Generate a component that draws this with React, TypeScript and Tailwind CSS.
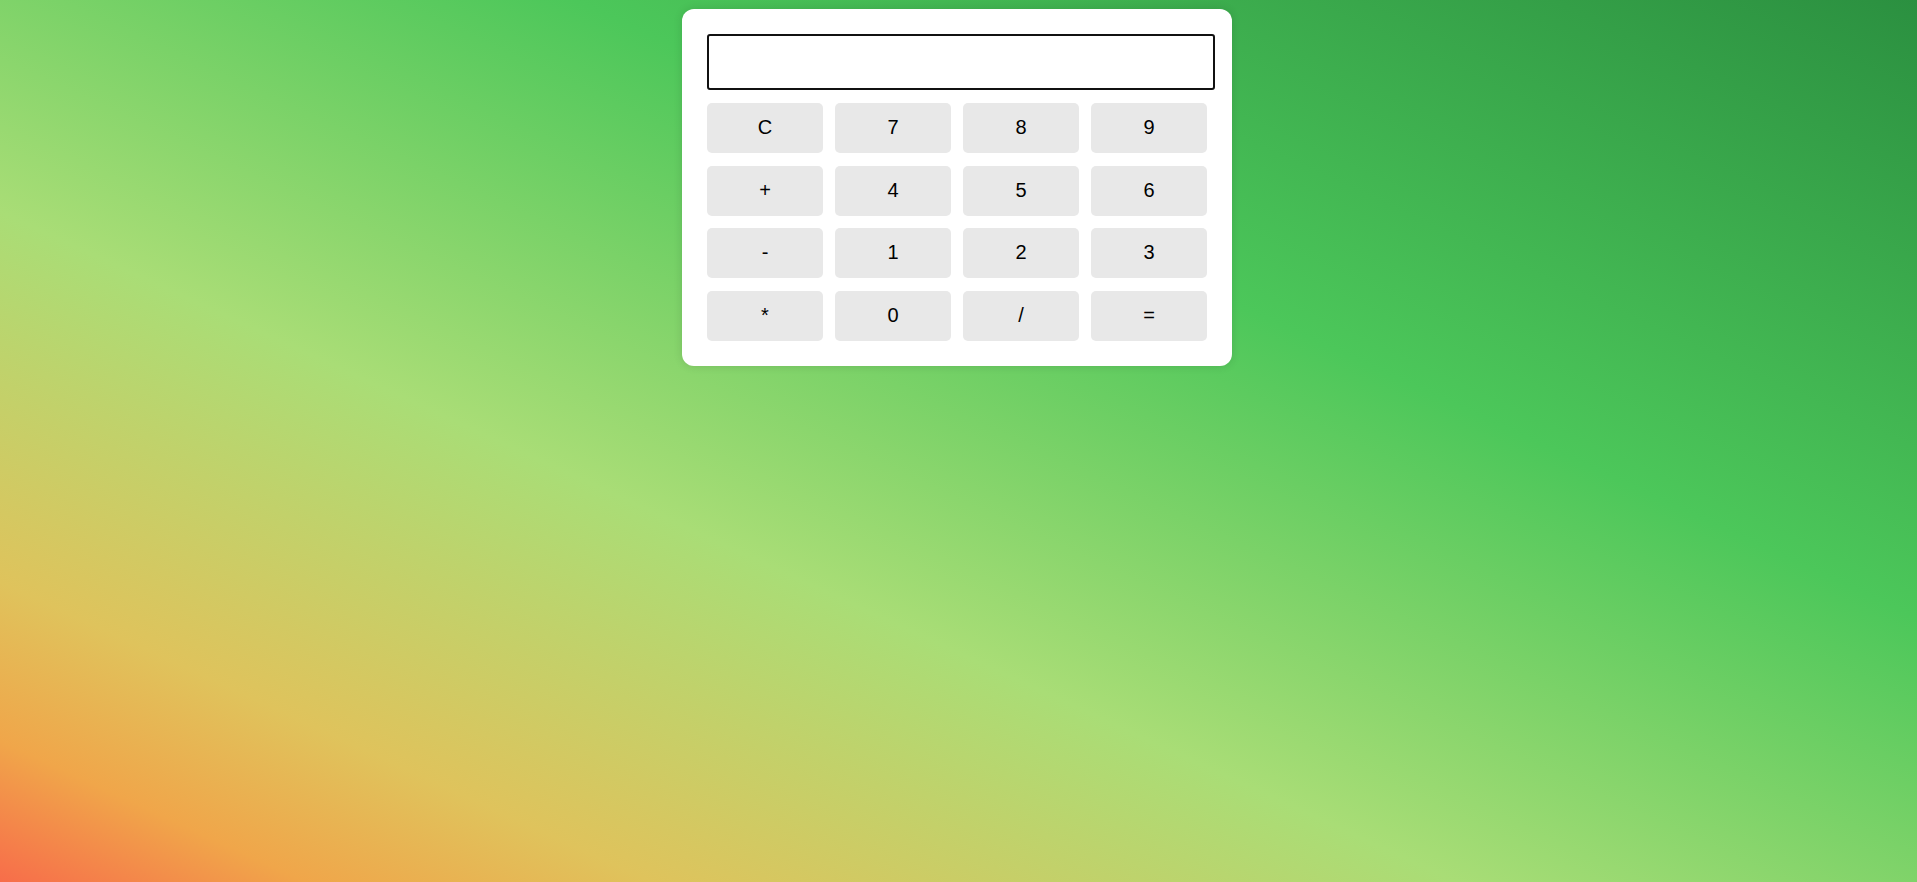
import { useState } from "react";

const keys = ["C", "7", "8", "9", "+", "4", "5", "6", "-", "1", "2", "3", "*", "0", "/", "="];

function evaluate(expr: string) {
  try {
    // simple calculator, same as the original page
    const result = Function(`"use strict"; return (${expr})`)();
    return String(result);
  } catch {
    return "Error";
  }
}

export default function App() {
  const [display, setDisplay] = useState("");

  const press = (key: string) => {
    if (key === "C") return setDisplay("");
    if (key === "=") return setDisplay(evaluate(display));
    setDisplay((d) => d + key);
  };

  return (
    <div className="min-h-screen w-full bg-[linear-gradient(to_top_right,#f76d4a_0%,#f0a64a_8%,#dfc35c_17%,#a9dd76_38%,#4cc75a_65%,#2b9040_100%)] pt-[9px] pr-[3px] font-['Liberation_Sans',Arial,sans-serif]">
      <div className="mx-auto w-[550px] rounded-[12px] bg-white p-[25px] shadow-[0_0_10px_rgba(0,0,0,0.12)]">
        <input
          type="text"
          value={display}
          readOnly
          className="mb-[13px] block h-[56px] w-[508px] rounded-[3px] border-2 border-[#111] bg-white px-[10px] text-right text-[20px] text-black outline-none"
        />
        <div className="grid w-[500px] grid-cols-4 gap-x-3 gap-y-[12.7px]">
          {keys.map((k) => (
            <button
              key={k}
              onClick={() => press(k)}
              className="flex h-[50px] items-center justify-center rounded-[5px] bg-[#e8e8e8] pb-[2px] text-[20px] text-black"
            >
              {k}
            </button>
          ))}
        </div>
      </div>
    </div>
  );
}
